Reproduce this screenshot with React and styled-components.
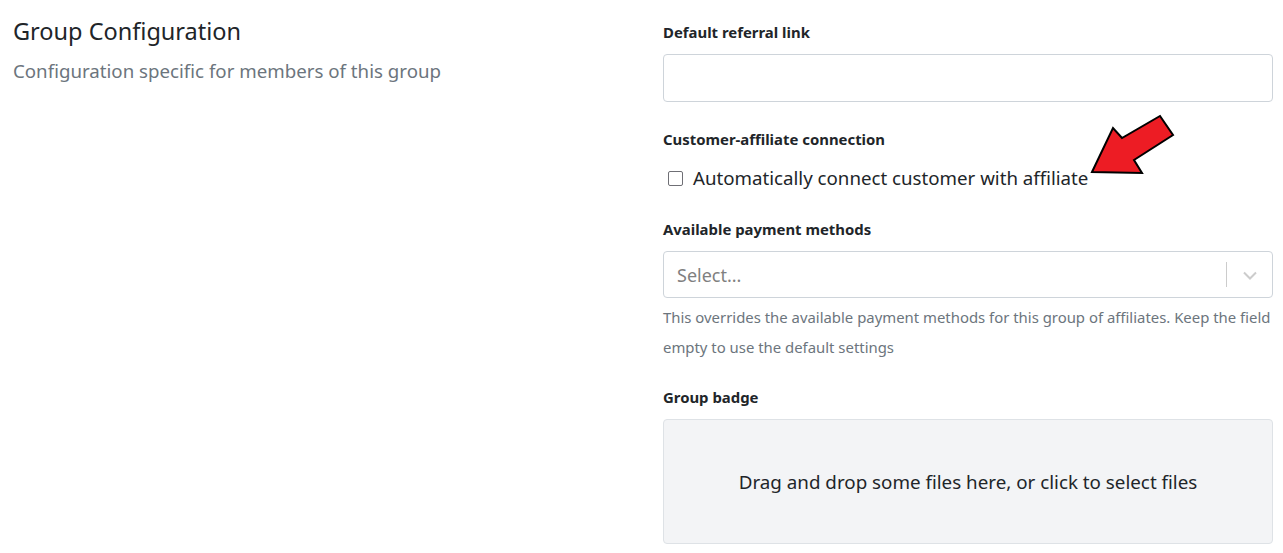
import React from "react";
import styled, { createGlobalStyle } from "styled-components";

const Global = createGlobalStyle`
  body {
    margin: 0;
    background: #fff;
    font-family: "Noto Sans", "Open Sans", sans-serif;
    color: #212529;
  }
`;

const Page = styled.div`
  display: grid;
  grid-template-columns: 1fr 610px;
  column-gap: 20px;
  padding: 14px 10px 0 13px;
  position: relative;
`;

const Intro = styled.div`
  display: flex;
  flex-direction: column;
  gap: 10px;
`;

const Title = styled.h2`
  margin: 0;
  font-size: 23.5px;
  font-weight: 400;
  line-height: 34px;
  color: #212529;
`;

const Subtitle = styled.p`
  margin: 0;
  font-size: 18.7px;
  line-height: 26px;
  color: #6c757d;
`;

const Form = styled.div`
  display: flex;
  flex-direction: column;
  padding-top: 8px;
`;

const Field = styled.div`
  display: flex;
  flex-direction: column;
  margin-bottom: ${(p) => p.$space || 24}px;
`;

const Label = styled.label`
  font-size: 14.9px;
  font-weight: 700;
  line-height: 20px;
  color: #212529;
  margin-bottom: ${(p) => p.$gap || 12}px;
`;

const TextInput = styled.input`
  box-sizing: border-box;
  height: 48px;
  width: 100%;
  border: 1px solid #ced4da;
  border-radius: 4px;
  padding: 0 12px;
  font: inherit;
`;

const CheckRow = styled.label`
  display: flex;
  align-items: center;
  gap: 10px;
  padding-left: 5px;
  font-size: 18.7px;
  line-height: 26px;
  color: #212529;
`;

const Box = styled.span`
  box-sizing: border-box;
  width: 15px;
  height: 15px;
  border: 1.5px solid #6f6f75;
  border-radius: 2px;
  background: #fff;
`;

const SelectBox = styled.div`
  box-sizing: border-box;
  height: 47px;
  border: 1px solid #ced4da;
  border-radius: 4px;
  display: flex;
  align-items: center;
  padding-left: 13px;
`;

const Placeholder = styled.span`
  flex: 1;
  font-size: 18px;
  color: #808080;
`;

const Separator = styled.span`
  width: 1px;
  align-self: stretch;
  margin: 10px 0;
  background: #ccc;
`;

const Chevron = styled.span`
  width: 45px;
  display: flex;
  justify-content: center;
  align-items: center;
  color: #ccc;
`;

const Help = styled.p`
  margin: 4px 0 0;
  font-size: 14.9px;
  line-height: 30px;
  color: #6c757d;
`;

const Dropzone = styled.div`
  box-sizing: border-box;
  height: 125px;
  border: 1px solid #dee2e6;
  border-radius: 4px;
  background: #f3f4f6;
  display: flex;
  align-items: center;
  justify-content: center;
  font-size: 18.8px;
  color: #212529;
`;

const Arrow = styled.svg`
  position: absolute;
  left: 1085px;
  top: 110px;
  pointer-events: none;
`;

export default function App() {
  return (
    <>
      <Global />
      <Page>
        <Intro>
          <Title>Group Configuration</Title>
          <Subtitle>Configuration specific for members of this group</Subtitle>
        </Intro>
        <Form>
          <Field $space={27}>
            <Label>Default referral link</Label>
            <TextInput type="text" />
          </Field>
          <Field $space={28}>
            <Label $gap={16}>Customer-affiliate connection</Label>
            <CheckRow>
              <Box />
              Automatically connect customer with affiliate
            </CheckRow>
          </Field>
          <Field $space={25}>
            <Label>Available payment methods</Label>
            <SelectBox>
              <Placeholder>Select...</Placeholder>
              <Separator />
              <Chevron>
                <svg width="20" height="20" viewBox="0 0 20 20">
                  <path
                    d="M4 7.5 L10 13.5 L16 7.5"
                    fill="none"
                    stroke="currentColor"
                    strokeWidth="2"
                  />
                </svg>
              </Chevron>
            </SelectBox>
            <Help>
              This overrides the available payment methods for this group of affiliates. Keep the field
              empty to use the default settings
            </Help>
          </Field>
          <Field>
            <Label>Group badge</Label>
            <Dropzone>Drag and drop some files here, or click to select files</Dropzone>
          </Field>
        </Form>
        <Arrow width="100" height="75" viewBox="1085 110 100 75">
          <polygon
            points="1092,172 1113,128 1122,138 1160,116 1173,135 1134,160 1142,173"
            fill="#ed1c24"
            stroke="#000"
            strokeWidth="2"
            strokeLinejoin="miter"
          />
        </Arrow>
      </Page>
    </>
  );
}
